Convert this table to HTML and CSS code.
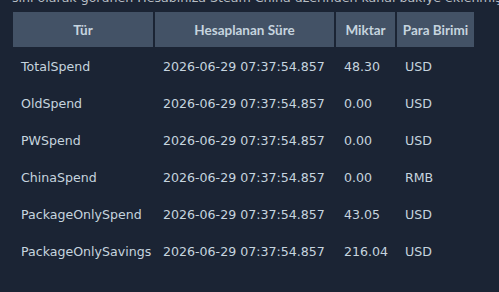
FILE: index.html
```html
<!DOCTYPE html>
<html lang="tr">
<head>
<meta charset="utf-8">
<link rel="stylesheet" href="styles.css">
</head>
<body>
<p class="intro">sını olarak görünen Hesabınıza Steam China üzerinden kanal bakiye eklenmişse <b>ChinaSpend</b> değeri artar.</p>
<table class="spend">
  <colgroup>
    <col class="c1"><col class="c2"><col class="c3"><col class="c4">
  </colgroup>
  <thead>
    <tr><th>Tür</th><th>Hesaplanan Süre</th><th>Miktar</th><th>Para Birimi</th></tr>
  </thead>
  <tbody>
    <tr><td>TotalSpend</td><td>2026-06-29 07:37:54.857</td><td>48.30</td><td>USD</td></tr>
    <tr><td>OldSpend</td><td>2026-06-29 07:37:54.857</td><td>0.00</td><td>USD</td></tr>
    <tr><td>PWSpend</td><td>2026-06-29 07:37:54.857</td><td>0.00</td><td>USD</td></tr>
    <tr><td>ChinaSpend</td><td>2026-06-29 07:37:54.857</td><td>0.00</td><td>RMB</td></tr>
    <tr><td>PackageOnlySpend</td><td>2026-06-29 07:37:54.857</td><td>43.05</td><td>USD</td></tr>
    <tr><td>PackageOnlySavings</td><td>2026-06-29 07:37:54.857</td><td>216.04</td><td>USD</td></tr>
  </tbody>
</table>
</body>
</html>
```
FILE: styles.css
```css
html, body {
  margin: 0;
  padding: 0;
  background: #1b2434;
  overflow: hidden;
}
body {
  font-family: "DejaVu Sans", "Noto Sans", sans-serif;
  font-size: 12.6px;
  color: #c6d4df;
  width: 499px;
  height: 292px;
}
.intro {
  margin: -10px 0 0 0;
  padding-left: 12px;
  line-height: 16px;
  white-space: nowrap;
  overflow: hidden;
  color: #b8bec4;
}
.intro b {
  color: #e4e8eb;
}
.spend {
  border-collapse: separate;
  border-spacing: 2px;
  margin: 4px 0 0 11px;
  table-layout: fixed;
}
.c1 { width: 140px; }
.c2 { width: 179px; }
.c3 { width: 59px; }
.c4 { width: 77px; }
.spend th {
  background: #435266;
  height: 35px;
  padding: 0;
  font-family: "Lato", "DejaVu Sans", sans-serif;
  font-size: 13.5px;
  font-weight: bold;
  text-align: center;
  white-space: nowrap;
  color: #c6d4df;
}
.spend td {
  height: 35px;
  padding: 0 0 0 8px;
  white-space: nowrap;
  text-align: left;
}
```
